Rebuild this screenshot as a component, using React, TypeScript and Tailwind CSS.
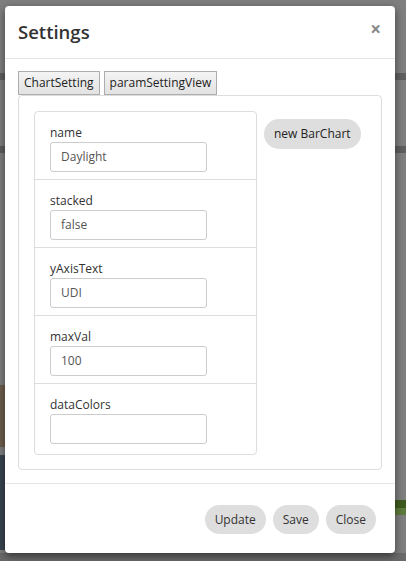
const fields = [
  { label: "name", value: "Daylight" },
  { label: "stacked", value: "false" },
  { label: "yAxisText", value: "UDI" },
  { label: "maxVal", value: "100" },
  { label: "dataColors", value: "" },
];

export default function App() {
  return (
    <div
      className="relative w-[406px] h-[561px] overflow-hidden bg-[#7f7f7f] pt-[6px] pl-[5px]"
      style={{ fontFamily: '"Open Sans", "Noto Sans", sans-serif' }}
    >
      {/* dimmed page underneath */}
      <div className="absolute left-0 top-[73px] w-full h-[7px] bg-[#5f5f5f]" />
      <div className="absolute left-0 top-[146px] w-full h-[7px] bg-[#5f5f5f]" />
      <div className="absolute left-0 top-[385px] w-[5px] h-[62px] bg-[#6e5f4e]" />
      <div className="absolute left-0 top-[455px] w-[5px] h-[95px] bg-[#3a4550]" />
      <div className="absolute left-[395px] top-[500px] w-[11px] h-[8px] bg-[#3f5a1e]" />
      <div className="absolute left-[395px] top-[508px] w-[11px] h-[7px] bg-[#5d7a3c]" />
      <div className="absolute left-0 top-[553px] w-full h-[8px] bg-[#6a6a6a]" />

      <div className="relative w-[390px] h-[547px] bg-white rounded-[4px] flex flex-col shadow-[0_3px_9px_rgba(0,0,0,0.5)]">
        <div className="h-[53px] px-[13px] flex items-center justify-between border-b border-[#e5e5e5]">
          <h4 className="text-[18.5px] text-[#333] font-semibold">Settings</h4>
          <span className="text-[19px] text-[#8a8a8a] font-bold leading-none mb-[6px] mr-[1px]">×</span>
        </div>

        <div className="px-[13px] pt-[12px] h-[425px] border-b border-[#e5e5e5]">
          <div className="flex gap-[4px]">
            <button className="h-[24px] px-[5px] text-[12px] text-[#222] border border-[#adadad] bg-gradient-to-b from-[#f4f4f4] to-[#e2e2e2]">
              ChartSetting
            </button>
            <button className="h-[24px] px-[5px] text-[12px] text-[#222] border border-[#adadad] bg-gradient-to-b from-[#f4f4f4] to-[#e2e2e2]">
              paramSettingView
            </button>
          </div>
          <div className="h-[375px] border border-[#ddd] rounded-[4px] pt-[15px] px-[15px] flex gap-[7px]">
            <div className="w-[223px] border border-[#ddd] rounded-[4px] h-[344px] flex flex-col">
              {fields.map((f, i) => (
                <div
                  key={f.label}
                  className={`h-[68px] px-[15px] pt-[12px] ${i < fields.length - 1 ? "border-b border-[#ddd]" : ""}`}
                >
                  <div className="text-[12px] text-[#333] leading-[18px]">{f.label}</div>
                  <div className="w-[157px] h-[30px] border border-[#ccc] rounded-[3px] pl-[10px] flex items-center text-[12px] text-[#555]">
                    {f.value}
                  </div>
                </div>
              ))}
            </div>
            <div className="pt-[8px]">
              <button className="h-[30px] px-[10px] rounded-full bg-[#dedede] text-[12px] text-[#222] whitespace-nowrap">
                new BarChart
              </button>
            </div>
          </div>
        </div>

        <div className="flex justify-end gap-[7px] pr-[19px] pt-[21px]">
          <button className="h-[29px] px-[10px] rounded-full bg-[#dedede] text-[12px] text-[#333]">Update</button>
          <button className="h-[29px] px-[10px] rounded-full bg-[#dedede] text-[12px] text-[#333]">Save</button>
          <button className="h-[29px] px-[10px] rounded-full bg-[#dedede] text-[12px] text-[#333]">Close</button>
        </div>
      </div>
    </div>
  );
}
